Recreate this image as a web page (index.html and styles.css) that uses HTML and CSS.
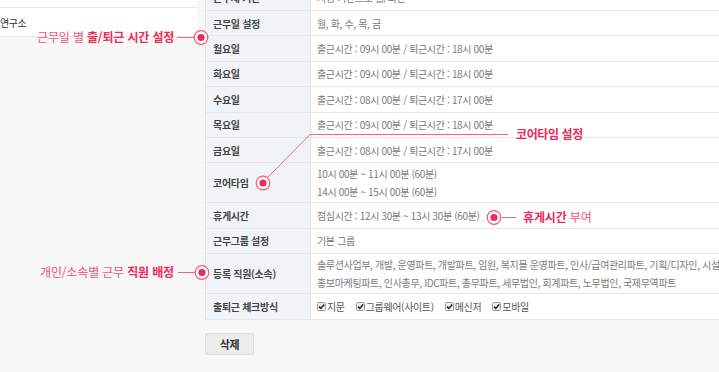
FILE: index.html
```html
<!DOCTYPE html>
<html lang="ko">
<head>
<meta charset="utf-8">
<title>근무 설정</title>
<link rel="stylesheet" href="styles.css">
</head>
<body>
<div class="page">
  <aside class="tree">
    <div class="tree-row"></div>
    <div class="tree-row">연구소</div>
  </aside>
  <main class="content">
    <div class="info-table">
      <div class="row"><div class="th">근무제 기간</div><div class="td">지정 기간으로 월/회인</div></div>
      <div class="row"><div class="th">근무일 설정</div><div class="td">월, 화, 수, 목, 금</div></div>
      <div class="row"><div class="th">월요일</div><div class="td">출근시간 : 09시 00분 / 퇴근시간 : 18시 00분</div></div>
      <div class="row"><div class="th">화요일</div><div class="td">출근시간 : 09시 00분 / 퇴근시간 : 18시 00분</div></div>
      <div class="row"><div class="th">수요일</div><div class="td">출근시간 : 08시 00분 / 퇴근시간 : 17시 00분</div></div>
      <div class="row"><div class="th">목요일</div><div class="td">출근시간 : 09시 00분 / 퇴근시간 : 18시 00분</div></div>
      <div class="row"><div class="th">금요일</div><div class="td">출근시간 : 08시 00분 / 퇴근시간 : 17시 00분</div></div>
      <div class="row row-tall"><div class="th">코어타임</div><div class="td"><div class="line">10시 00분 ~ 11시 00분 (60분)</div><div class="line">14시 00분 ~ 15시 00분 (60분)</div></div></div>
      <div class="row"><div class="th">휴게시간</div><div class="td">점심시간 : 12시 30분 ~ 13시 30분 (60분)</div></div>
      <div class="row"><div class="th">근무그룹 설정</div><div class="td">기본 그룹</div></div>
      <div class="row row-tall"><div class="th">등록 직원(소속)</div><div class="td"><div class="line">솔루션사업부, 개발, 운영파트, 개발파트, 임원, 복지몰 운영파트, 인사/급여관리파트, 기획/디자인, 시설</div><div class="line">홍보마케팅파트, 인사총무, IDC파트, 총무파트, 세무법인, 회계파트, 노무법인, 국제무역파트</div></div></div>
      <div class="row"><div class="th">출퇴근 체크방식</div><div class="td checks">
        <span class="check"><svg class="box" width="9" height="9" viewBox="0 0 9 9"><rect x="0.5" y="0.5" width="8" height="8" rx="1" fill="#ececec" stroke="#9a9a9a"/><path d="M2 4.6 L3.8 6.4 L7.2 2.4" fill="none" stroke="#222" stroke-width="1.5"/></svg>지문</span>
        <span class="check"><svg class="box" width="9" height="9" viewBox="0 0 9 9"><rect x="0.5" y="0.5" width="8" height="8" rx="1" fill="#ececec" stroke="#9a9a9a"/><path d="M2 4.6 L3.8 6.4 L7.2 2.4" fill="none" stroke="#222" stroke-width="1.5"/></svg>그룹웨어(사이트)</span>
        <span class="check"><svg class="box" width="9" height="9" viewBox="0 0 9 9"><rect x="0.5" y="0.5" width="8" height="8" rx="1" fill="#ececec" stroke="#9a9a9a"/><path d="M2 4.6 L3.8 6.4 L7.2 2.4" fill="none" stroke="#222" stroke-width="1.5"/></svg>메신저</span>
        <span class="check"><svg class="box" width="9" height="9" viewBox="0 0 9 9"><rect x="0.5" y="0.5" width="8" height="8" rx="1" fill="#ececec" stroke="#9a9a9a"/><path d="M2 4.6 L3.8 6.4 L7.2 2.4" fill="none" stroke="#222" stroke-width="1.5"/></svg>모바일</span>
      </div></div>
    </div>
    <button class="btn" type="button">삭제</button>
  </main>
</div>

<svg class="callouts" width="719" height="372" viewBox="0 0 719 372">
  <g fill="none" stroke="#f2668a" stroke-width="1">
    <line x1="177" y1="37.5" x2="194" y2="37.5"/>
    <polyline points="267,178 310,134.5 508,134.5"/>
    <line x1="502" y1="217.5" x2="516" y2="217.5"/>
    <line x1="178" y1="272.5" x2="195" y2="272.5"/>
  </g>
  <g>
    <circle cx="201" cy="37.5" r="6.8" fill="#fff" stroke="#f2557c" stroke-width="1.2"/>
    <circle cx="201" cy="37.5" r="3.6" fill="#ee2a58"/>
    <circle cx="263" cy="183" r="6.8" fill="#fff" stroke="#f2557c" stroke-width="1.2"/>
    <circle cx="263" cy="183" r="3.6" fill="#ee2a58"/>
    <circle cx="494" cy="217.5" r="6.8" fill="#fff" stroke="#f2557c" stroke-width="1.2"/>
    <circle cx="494" cy="217.5" r="3.6" fill="#ee2a58"/>
    <circle cx="202" cy="272.5" r="6.8" fill="#fff" stroke="#f2557c" stroke-width="1.2"/>
    <circle cx="202" cy="272.5" r="3.6" fill="#ee2a58"/>
  </g>
</svg>
<div class="note note-a">근무일 별 <b>출/퇴근 시간 설정</b></div>
<div class="note note-b"><b>코어타임 설정</b></div>
<div class="note note-c"><b>휴게시간</b> 부여</div>
<div class="note note-d">개인/소속별 근무 <b>직원 배정</b></div>
</body>
</html>
```

FILE: styles.css
```css
html, body {
  margin: 0;
  padding: 0;
  overflow: hidden;
}
body {
  width: 719px;
  height: 372px;
  background: #f7f7f7;
  font-family: "Noto Sans CJK KR", "Noto Sans", sans-serif;
  position: relative;
}
.page {
  display: flex;
  align-items: flex-start;
  gap: 8px;
  margin-top: -14.4px;
}
.tree {
  width: 197px;
  flex: none;
  background: #fff;
  border-bottom: 1px solid #e9e9e9;
}
.tree-row {
  height: 22.4px;
  border-bottom: 1px solid #e6e6e6;
  box-sizing: border-box;
  display: flex;
  align-items: center;
  font-size: 10px;
  letter-spacing: -0.4px;
  color: #333;
}
.tree-row + .tree-row {
  height: 28px;
  border-bottom: none;
}
.content {
  width: 620px;
  flex: none;
}
.info-table {
  border-left: 1px solid #e3e3e3;
  background: #fff;
}
.row {
  display: flex;
  height: 25.4px;
  box-sizing: border-box;
  border-bottom: 1px solid #e6e6e6;
}
.row-tall {
  height: 40px;
}
.th {
  width: 105px;
  flex: none;
  box-sizing: border-box;
  padding-left: 7px;
  background: #f1f4f7;
  border-right: 1px solid #e3e3e3;
  display: flex;
  align-items: center;
  font-size: 10px;
  font-weight: 700;
  letter-spacing: -0.3px;
  color: #444;
}
.td {
  flex: 1;
  padding-left: 6px;
  display: flex;
  flex-direction: column;
  justify-content: center;
  font-size: 10px;
  letter-spacing: -0.35px;
  color: #7a7a7a;
  white-space: nowrap;
  overflow: hidden;
}
.line {
  line-height: 18px;
}
.checks {
  flex-direction: row;
  align-items: center;
  justify-content: flex-start;
  gap: 11px;
  color: #555;
}
.check {
  display: inline-flex;
  align-items: center;
  gap: 1px;
}
.box {
  display: block;
}
.btn {
  display: block;
  margin-top: 13px;
  width: 49px;
  height: 22px;
  padding: 0;
  background: #ededed;
  border: 1px solid #dedede;
  border-radius: 2px;
  font-family: "Noto Sans CJK KR", sans-serif;
  font-size: 11px;
  font-weight: 700;
  letter-spacing: -0.3px;
  color: #333;
}
.callouts {
  position: absolute;
  left: 0;
  top: 0;
}
.note {
  position: absolute;
  font-size: 12px;
  line-height: 16px;
  letter-spacing: -0.15px;
  color: #f2517a;
  white-space: nowrap;
}
.note b {
  color: #ee2a58;
  font-weight: 700;
}
.note-a { left: 37px; top: 29px; }
.note-b { left: 516px; top: 126px; letter-spacing: -0.4px; }
.note-c { left: 523px; top: 209px; }
.note-d { left: 40px; top: 264px; }
```
